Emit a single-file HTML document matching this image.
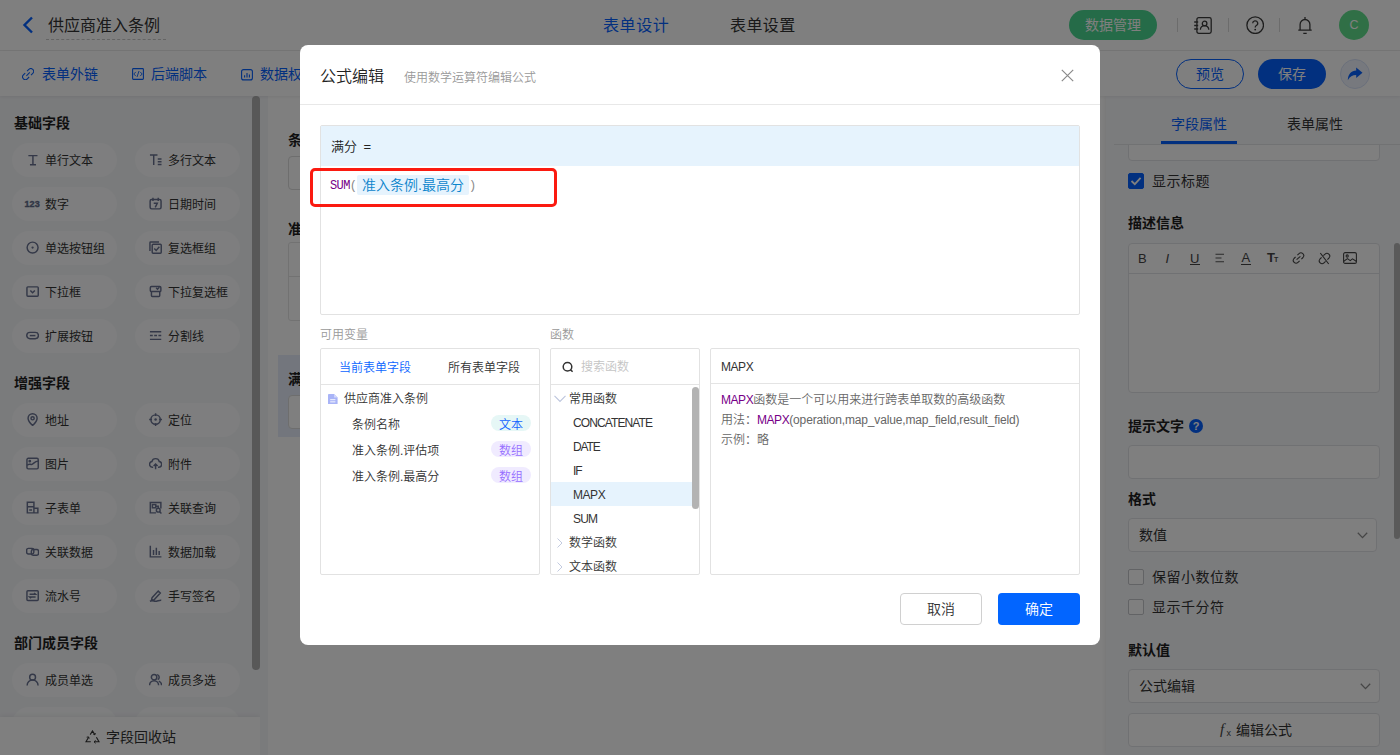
<!DOCTYPE html>
<html lang="zh-CN">
<head>
<meta charset="utf-8">
<title>公式编辑</title>
<style>
*{box-sizing:border-box;margin:0;padding:0}
html,body{width:1400px;height:755px;overflow:hidden;background:#fff}
body{font-family:"Liberation Sans","Noto Sans CJK SC",sans-serif;font-size:14px;color:#333;position:relative}
.abs{position:absolute}
svg{display:block}
/* ---------- page ---------- */
#page{position:absolute;left:0;top:0;width:1400px;height:755px;overflow:hidden;background:#fff}
#hdr{position:absolute;left:0;top:0;width:1400px;height:51px;background:#fff;border-bottom:1px solid #ececec}
#tbar{position:absolute;left:0;top:51px;width:1400px;height:45px;background:#fff;box-shadow:0 1px 3px rgba(0,0,0,.07);z-index:2}
.t16{font-size:16px;line-height:20px;white-space:nowrap}
.t14{font-size:14px;line-height:20px;white-space:nowrap}
.t12{font-size:12px;line-height:18px;white-space:nowrap}
.blue{color:#0560ff}
.sep{position:absolute;top:18px;width:1px;height:14px;background:#d9d9d9}
/* left */
#left{position:absolute;left:0;top:95px;width:268px;height:660px;background:#f5f6f9;overflow:hidden}
#lstrip{position:absolute;left:260px;top:95px;width:8px;height:660px;background:#f5f6f9}
.sect{position:absolute;left:14px;font-size:14px;font-weight:bold;line-height:20px;color:#1f1f1f;white-space:nowrap}
.pill{position:absolute;width:105px;height:34px;border-radius:17px;background:#fcfdfe;font-size:12px;line-height:34px;color:#333;white-space:nowrap}
.pill span{position:absolute;left:33px;top:1px}
.pill svg{position:absolute;left:13.6px;top:10.3px;width:13.2px;height:13.2px;stroke:#687190;fill:none;stroke-width:1.55}
.pill b{position:absolute;left:12.5px;top:0;font-size:9px;color:#616a89;letter-spacing:.1px;-webkit-text-stroke:.35px #616a89}
.c1{left:12px}.c2{left:135px}
#lthumb{position:absolute;left:252px;top:1px;width:8px;height:574px;border-radius:4px;background:#b1b1b1}
#recycle{position:absolute;left:0;top:622px;width:260px;height:38px;background:#fff;box-shadow:0 -1px 5px rgba(0,0,0,.07)}
/* canvas */
#canvas{position:absolute;left:268px;top:95px;width:840px;height:660px;background:#fff}
/* right */
#right{position:absolute;left:1107px;top:95px;width:293px;height:660px;background:#f7f8fb;box-shadow:-1px 0 0 #f7f8fb,-2px 0 5px rgba(0,0,0,.07)}
.rlabel{position:absolute;left:21px;font-size:14px;font-weight:bold;line-height:20px;color:#1f1f1f;white-space:nowrap}
.rinput{position:absolute;left:21px;width:252px;height:34px;border:1px solid #e1e3e6;border-radius:4px;background:#fff}
.cb{position:absolute;left:21px;width:16px;height:16px;border:1px solid #c4c6ca;border-radius:2px;background:#fff}
/* overlay + modal */
#mask{position:absolute;left:0;top:0;width:1400px;height:755px;background:rgba(0,0,0,.5);z-index:10}
#modal{position:absolute;left:300px;top:45px;width:800px;height:600px;background:#fff;border-radius:8px;z-index:11;font-weight:350}
.box{position:absolute;border:1px solid #e2e2e2;background:#fff;border-radius:2px}
.g12{font-size:12px;line-height:18px;color:#999;white-space:nowrap}
.row{position:absolute;font-size:12px;line-height:24px;color:#333;white-space:nowrap}
.tag{position:absolute;left:170px;width:40px;height:16px;border-radius:8px;font-size:12px;line-height:20px;text-align:center;overflow:visible;white-space:nowrap}
.fn{font-family:"Liberation Sans","Noto Sans CJK SC",sans-serif;letter-spacing:-.45px}
</style>
</head>
<body>
<div id="page">
  <!-- header -->
  <div id="hdr">
    <svg class="abs" style="left:22px;top:16px" width="12" height="18" viewBox="0 0 12 18"><path d="M10 1.5 2.5 9 10 16.5" fill="none" stroke="#0560ff" stroke-width="2.4"/></svg>
    <div class="abs t16" style="left:48px;top:16px;color:#333">供应商准入条例</div>
    <div class="abs" style="left:46px;top:39px;width:120px;height:0;border-top:1px dashed #c8c8c8"></div>
    <div class="abs t16 blue" style="left:603px;top:16px;letter-spacing:.6px">表单设计</div>
    <div class="abs t16" style="left:730px;top:16px;color:#333;letter-spacing:.4px">表单设置</div>
    <div class="abs t14" style="left:1069px;top:10px;width:88px;height:30px;border-radius:15px;background:#4ad690;color:#fff;text-align:center;line-height:30px">数据管理</div>

    <svg class="abs" style="left:1193.5px;top:16.8px" width="18" height="17" viewBox="0 0 18 17" fill="none" stroke="#3c3c3c" stroke-width="1.3"><rect x="2.9" y=".7" width="14.3" height="15.6" rx="1.8"/><path d="M.2 5h4M.2 8.500h4M.2 12h4"/><circle cx="10.600" cy="6.500" r="2.300"/><path d="M6.400 12.800a4.200 4.200 0 0 1 8.400 0"/></svg>
    <svg class="abs" style="left:1246px;top:16px" width="18.400" height="18.400" viewBox="0 0 18.400 18.400" fill="none" stroke="#3c3c3c" stroke-width="1.3"><circle cx="9.200" cy="9.200" r="8.300"/><path d="M6.700 7.300a2.500 2.500 0 1 1 3.700 2.200c-.8.500-1.200.9-1.200 1.900"/><circle cx="9.200" cy="13.600" r=".9" fill="#333" stroke="none"/></svg>
    <svg class="abs" style="left:1298px;top:16px" width="14" height="18.500" viewBox="0 0 14 18.500" fill="none" stroke="#3c3c3c" stroke-width="1.3"><path d="M.3 14.200h13.400M2.100 14.200V8.400a4.900 4.900 0 0 1 9.800 0v5.800M7 .9v2.300M5.300 17.300h3.400"/></svg>
    <div class="sep" style="left:1177px"></div>
    <div class="sep" style="left:1228px"></div>
    <div class="sep" style="left:1279px"></div>
    <div class="abs" style="left:1339px;top:10px;width:30px;height:30px;border-radius:15px;background:#60df8c;color:#fff;font-size:12.5px;line-height:30px;text-align:center">C</div>
  </div>
  <!-- toolbar -->
  <div id="tbar">
    <svg class="abs" style="left:22.300px;top:17px" width="12.200" height="12.200" viewBox="0 0 13 13" fill="none" stroke="#0560ff" stroke-width="1.150"><path d="M5.400 3.400 7.300 1.500a2.970 2.970 0 0 1 4.200 4.200L9.600 7.600M7.600 9.600 5.700 11.500a2.970 2.970 0 0 1-4.200-4.200L3.400 5.400M4.700 8.300 8.300 4.700"/></svg>
    <svg class="abs" style="left:132px;top:17px" width="12" height="12" viewBox="0 0 12 12" fill="none" stroke="#0560ff" stroke-width="1.100"><rect x=".6" y=".6" width="10.800" height="10.800" rx=".8"/><path d="M3.800 3.900 1.800 6l2 2.100M8.200 3.900 10.200 6l-2 2.100M7 3 5 9" stroke-width=".9"/></svg>
    <svg class="abs" style="left:241px;top:18px" width="12" height="11.500" viewBox="0 0 12 11.500" fill="none" stroke="#0560ff" stroke-width="1.100"><rect x=".6" y=".6" width="10.800" height="10.300" rx="2"/><path d="M3.600 6.200v2.400M6 4.100v4.500M8.400 5.600v3"/></svg>

    <div class="abs t14 blue" style="left:42px;top:13px">表单外链</div>
    <div class="abs t14 blue" style="left:151px;top:13px">后端脚本</div>
    <div class="abs t14 blue" style="left:260px;top:13px">数据权限</div>
    <div class="abs t14 blue" style="left:1176px;top:8px;width:68px;height:30px;border:1px solid #0560ff;border-radius:15px;text-align:center;line-height:28px">预览</div>
    <div class="abs t14" style="left:1258px;top:8px;width:68px;height:30px;border-radius:15px;background:#0560ff;color:#fff;text-align:center;line-height:30px">保存</div>
    <div class="abs" style="left:1340px;top:8px;width:30px;height:30px;border-radius:15px;border:1px solid #d6e0f7;background:#eff3fc"><svg width="28" height="28" viewBox="1 1 28 28"><path d="M22.500 13.700 16.200 8.600V11.600C11.500 11.800 8 15 7.800 21.200 9.800 17.700 12.500 16.200 16.200 16.100V19Z" fill="#0560ff"/></svg></div>
  </div>
  <!-- left panel -->
  <div id="left">
    <div class="sect" style="top:18px">基础字段</div>
    <div class="pill c1" style="top:48px"><svg viewBox="0 0 14 14"><path d="M2.5 2.8h9.7M7.35 2.8v9.6M4.2 12.4h6.4"/></svg><span>单行文本</span></div>
    <div class="pill c2" style="top:48px"><svg viewBox="0 0 14 14"><path d="M1 2.2h8M5 2.2v10.6M9.3 6.3h4M9.3 9.3h4M9.3 12.3h4"/></svg><span>多行文本</span></div>
    <div class="pill c1" style="top:92px"><b>123</b><span>数字</span></div>
    <div class="pill c2" style="top:92px"><svg viewBox="0 0 14 14"><rect x="1.2" y="2.6" width="11.6" height="10" rx="1.6"/><path d="M4.2 .8v3.4M9.8 .8v3.4M5 6.6h3.8L6.6 11"/></svg><span>日期时间</span></div>
    <div class="pill c1" style="top:136px"><svg viewBox="0 0 14 14"><circle cx="7" cy="7" r="5.8"/><circle cx="7" cy="7" r="1.2" fill="#687190" stroke="none"/></svg><span>单选按钮组</span></div>
    <div class="pill c2" style="top:136px"><svg viewBox="0 0 14 14"><rect x="3.4" y="3.4" width="9.6" height="9.6" rx="1"/><path d="M1 10.6V1.8a.8.8 0 0 1 .8-.8h8.8M5.6 8l2 2 3.4-3.8"/></svg><span>复选框组</span></div>
    <div class="pill c1" style="top:180px"><svg viewBox="0 0 14 14"><rect x="1" y="2" width="12" height="10" rx="1"/><path d="M4.6 5.8 7 8.2l2.4-2.4"/></svg><span>下拉框</span></div>
    <div class="pill c2" style="top:180px"><svg viewBox="0 0 14 14"><rect x="1.4" y="1.6" width="11.2" height="5.4" rx="1.2"/><path d="M2.6 7v4.2a1 1 0 0 0 1 1h6.8a1 1 0 0 0 1-1V7M7.6 3l1.4 1.4L11 2.4"/></svg><span>下拉复选框</span></div>
    <div class="pill c1" style="top:224px"><svg viewBox="0 0 14 14"><rect x=".8" y="3.6" width="12.4" height="6.8" rx="3.4"/><path d="M4 7h6"/></svg><span>扩展按钮</span></div>
    <div class="pill c2" style="top:224px"><svg viewBox="0 0 14 14"><path d="M1 3h12M1 11h12M1 7h3M5.5 7h3M10 7h3"/></svg><span>分割线</span></div>
    <div class="sect" style="top:278px">增强字段</div>
    <div class="pill c1" style="top:308px"><svg viewBox="0 0 14 14"><path d="M7 13.2S2.2 9 2.2 5.6a4.8 4.8 0 0 1 9.600 0C11.8 9 7 13.200 7 13.200z"/><circle cx="7" cy="5.600" r="1.7"/></svg><span>地址</span></div>
    <div class="pill c2" style="top:308px"><svg viewBox="0 0 14 14"><circle cx="7" cy="7" r="5"/><path d="M7 .2v3M7 10.800v3M.2 7h3M10.800 7h3"/><circle cx="7" cy="7" r="1.300" fill="#687190" stroke="none"/></svg><span>定位</span></div>
    <div class="pill c1" style="top:352px"><svg viewBox="0 0 14 14"><rect x="1" y="1.4" width="12" height="11.2" rx="1.4"/><path d="M1.200 9c1.800-2.800 3.600-.6 5.200-1.200 1.800-.7 3-3.200 6.400-3.400"/><circle cx="4" cy="4.400" r=".7"/></svg><span>图片</span></div>
    <div class="pill c2" style="top:352px"><svg viewBox="0 0 14 14"><path d="M4.400 10.800H3.600a3 3 0 0 1-.5-5.960 4 4 0 0 1 7.800 0A3 3 0 0 1 10.400 10.800H9.600M7 13V7.600M4.900 9.500 7 7.400l2.100 2.100"/></svg><span>附件</span></div>
    <div class="pill c1" style="top:396px"><svg viewBox="0 0 14 14"><path d="M1.400 1.400h7v11.200h-7zM1.400 6h7M8.400 7.600h4.200v5H8.400M3.400 9.600h3"/></svg><span>子表单</span></div>
    <div class="pill c2" style="top:396px"><svg viewBox="0 0 14 14"><path d="M12.600 8V1.600H1.400v11h6"/><rect x="3.600" y="3.800" width="3.600" height="3.400"/><circle cx="9.800" cy="9.800" r="2"/><path d="M11.300 11.300l1.900 1.900M7.200 5.500h2.600v2.300"/></svg><span>关联查询</span></div>
    <div class="pill c1" style="top:440px"><svg viewBox="0 0 14 14"><rect x=".7" y="3.600" width="7.600" height="6" rx="1.800"/><rect x="5.700" y="4.800" width="7.600" height="6" rx="1.800"/></svg><span>关联数据</span></div>
    <div class="pill c2" style="top:440px"><svg viewBox="0 0 14 14"><path d="M1.400 .8v11.800h11.800M4.800 5.400v5.200M7.800 3v7.600M10.800 6.400v4.200"/></svg><span>数据加载</span></div>
    <div class="pill c1" style="top:484px"><svg viewBox="0 0 14 14"><rect x="1" y="1.800" width="12" height="10.400" rx="1"/><path d="M3.800 5.600h6.400l-1.600-1.400M10.200 8.400H3.800l1.600 1.400"/></svg><span>流水号</span></div>
    <div class="pill c2" style="top:484px"><svg viewBox="0 0 14 14"><path d="M3.200 9.400 9.800 2.200l2.200 2-6.600 7.200-2.800.6zM1 13c2.500-1.400 4.800.5 7 0 1.800-.4 3.400-1.200 5-1"/></svg><span>手写签名</span></div>
    <div class="sect" style="top:538px">部门成员字段</div>
    <div class="pill c1" style="top:568px"><svg viewBox="0 0 14 14"><circle cx="7" cy="4.400" r="3.100"/><path d="M1.200 13.200a5.800 5.800 0 0 1 11.600 0"/></svg><span>成员单选</span></div>
    <div class="pill c2" style="top:568px"><svg viewBox="0 0 14 14"><circle cx="5.400" cy="4.400" r="2.900"/><path d="M.6 13a4.800 4.800 0 0 1 9.600 0M8.600 1.700a2.900 2.900 0 0 1 .6 5.400M10.400 8.600a4.800 4.800 0 0 1 3 4.400"/></svg><span>成员多选</span></div>
    <div class="pill c1" style="top:612px"></div>
    <div class="pill c2" style="top:612px"></div>
    <div id="lthumb"></div>
    <div id="recycle"><svg class="abs" style="left:84.500px;top:12.500px" width="15" height="14" viewBox="0 0 15 14" fill="none" stroke="#333" stroke-width="1.100"><path d="M5.200 4.600 7.500 .9l2.300 3.700M3.600 7.200 1 11.800h4.800M11.400 7.200 14 11.800H9.200"/><path d="M8.300 4.200l1.600.6.500-1.700M1.700 7.200l1.900-.3.600 1.700M10.600 10.400 9 11.800l1.600 1.400" stroke-width="1"/></svg><div class="abs t14" style="left:106px;top:10px;color:#333">字段回收站</div></div>
  </div>
  <div id="lstrip"></div>
  <!-- canvas -->
  <div id="canvas">
    <div class="abs t14" style="left:20px;top:35px;font-weight:bold;color:#1f1f1f">条例名称</div>
    <div class="abs" style="left:20px;top:61px;width:780px;height:34px;border:1px solid #dcdcdc;border-radius:4px"></div>
    <div class="abs t14" style="left:20px;top:124px;font-weight:bold;color:#1f1f1f">准入条例</div>
    <div class="abs" style="left:20px;top:147px;width:780px;height:79px;border:1px solid #e4e4e4;border-radius:3px"></div>
    <div class="abs" style="left:20px;top:181px;width:780px;height:1px;background:#e4e4e4"></div>
    <div class="abs" style="left:10px;top:260px;width:820px;height:82px;background:#e6edfb"></div>
    <div class="abs t14" style="left:20px;top:274px;font-weight:bold;color:#1f1f1f">满分</div>
    <div class="abs" style="left:20px;top:300px;width:780px;height:34px;border:1px solid #dcdcdc;border-radius:4px;background:#fff"></div>
  </div>
  <!-- right panel -->
  <div id="right">
    <div class="abs t14 blue" style="left:64px;top:19px">字段属性</div>
    <div class="abs t14" style="left:180px;top:19px;color:#333">表单属性</div>
    <div class="abs" style="left:7px;top:49px;width:286px;height:1px;background:#e3e4e6"></div>
    <div class="abs" style="left:54px;top:46px;width:76px;height:3px;background:#0560ff"></div>
    <div class="abs" style="left:0;top:50px;width:293px;height:610px;overflow:hidden">
      <div class="rinput" style="top:-18px"></div>
      <div class="cb" style="top:28px;background:#0560ff;border-color:#0560ff"><svg width="14" height="14" viewBox="0 0 14 14"><path d="M2.5 7 5.8 10.2 11.6 3.8" fill="none" stroke="#fff" stroke-width="1.8"/></svg></div>
      <div class="abs t14" style="left:45px;top:26px;color:#333;letter-spacing:.5px">显示标题</div>
      <div class="rlabel" style="top:68px">描述信息</div>
      <div class="rinput" style="top:98px;height:150px"></div>
      <div class="abs" style="left:22px;top:128px;width:250px;height:1px;background:#e1e3e6"></div>

      <div class="abs" style="left:31px;top:106px;font-size:13px;line-height:16px;color:#444">B</div>
      <div class="abs" style="left:58.5px;top:106px;font-size:13px;line-height:16px;color:#444;font-style:italic">I</div>
      <div class="abs" style="left:83px;top:106px;font-size:13px;line-height:16px;color:#444">U</div>
      <div class="abs" style="left:82.5px;top:119px;width:10px;height:1px;background:#444"></div>
      <svg class="abs" style="left:108px;top:108px" width="10" height="10" viewBox="0 0 10 10" stroke="#555" stroke-width="1.100" fill="none"><path d="M.5 1.200h8.500M.5 5h6M.5 8.800h8.500"/></svg>
      <div class="abs" style="left:134.500px;top:105px;font-size:13px;line-height:16px;color:#444">A</div>
      <div class="abs" style="left:134px;top:119px;width:10px;height:1px;background:#444"></div>
      <div class="abs" style="left:160px;top:105px;font-size:13px;line-height:16px;color:#444;font-weight:bold;white-space:nowrap">T<span style="font-size:7px;margin-left:-1px">T</span></div>
      <svg class="abs" style="left:185px;top:107px" width="13" height="12" viewBox="0 0 13 12" stroke="#444" stroke-width="1.100" fill="none"><path d="M5.400 3.200 7 1.700a2.760 2.760 0 0 1 4 3.800L9.400 7.100M7.600 8.800 6 10.300a2.760 2.760 0 0 1-4-3.800L3.600 4.900M4.600 7.700 8.400 4.300"/></svg>
      <svg class="abs" style="left:210.500px;top:106.500px" width="13" height="13" viewBox="0 0 13 13" stroke="#444" stroke-width="1.100" fill="none"><path d="M5.400 3.700 7 2.200a2.760 2.760 0 0 1 4 3.800L9.400 7.600M7.600 9.300 6 10.800a2.760 2.760 0 0 1-4-3.800L3.600 5.400M2.300 1 10.700 12"/></svg>
      <svg class="abs" style="left:235.500px;top:107px" width="14" height="12" viewBox="0 0 14 12" stroke="#444" stroke-width="1.100" fill="none"><rect x=".6" y=".6" width="12.800" height="10.800" rx="1.500"/><circle cx="4.200" cy="4" r="1.100"/><path d="M.8 9.300 4.500 6.600l2.700 2 2.300-1.800 3.700 2.400"/></svg>
      <div class="rlabel" style="top:271px">提示文字</div>
      <div class="abs" style="left:82px;top:274px;width:14px;height:14px;border-radius:7px;background:#0560ff;color:#fff;font-size:11px;font-weight:bold;line-height:14px;text-align:center">?</div>
      <div class="rinput" style="top:300px"></div>
      <div class="rlabel" style="top:344px">格式</div>
      <div class="rinput" style="top:373px;width:249px"><div class="abs t14" style="left:10px;top:6px;color:#333">数值</div><svg class="abs" style="left:228px;top:12.800px" width="11" height="7" viewBox="0 0 11 7"><path d="M.8.8 5.500 5.600 10.200.8" fill="none" stroke="#8c8c8c" stroke-width="1.300"/></svg></div>
      <div class="cb" style="top:424px"></div>
      <div class="abs t14" style="left:45px;top:422px;color:#333;letter-spacing:.5px">保留小数位数</div>
      <div class="cb" style="top:454px"></div>
      <div class="abs t14" style="left:45px;top:452px;color:#333;letter-spacing:.5px">显示千分符</div>
      <div class="rlabel" style="top:495px">默认值</div>
      <div class="rinput" style="top:524px"><div class="abs t14" style="left:10px;top:6px;color:#333">公式编辑</div><svg class="abs" style="left:231px;top:12.800px" width="11" height="7" viewBox="0 0 11 7"><path d="M.8.8 5.500 5.600 10.200.8" fill="none" stroke="#8c8c8c" stroke-width="1.300"/></svg></div>
      <div class="rinput" style="top:568px"><div class="abs" style="left:91px;top:5px;font-family:'Liberation Serif',serif;font-style:italic;font-size:15px;line-height:20px;color:#444">f</div><div class="abs" style="left:97.5px;top:14px;font-size:9px;line-height:10px;color:#444">x</div><div class="abs t14" style="left:107px;top:6px;color:#333">编辑公式</div></div>
    </div>
    <div class="abs" style="left:287px;top:148px;width:6px;height:296px;border-radius:3px;background:#b5b5b5"></div>
  </div>
</div>

<div id="mask"></div>

<!-- modal -->
<div id="modal">
  <div class="abs t16" style="left:20px;top:22px;color:#222">公式编辑</div>
  <div class="abs g12" style="left:104px;top:24px">使用数学运算符编辑公式</div>
  <svg class="abs" style="left:760.500px;top:23.500px" width="13" height="13" viewBox="0 0 13 13"><path d="M.8.800 12.200 12.200M12.200.8.800 12.200" stroke="#8a8a8a" stroke-width="1.200" fill="none"/></svg>
  <div class="abs" style="left:0;top:59px;width:800px;height:1px;background:#e8e8e8"></div>
  <!-- editor -->
  <div class="box" style="left:20px;top:80px;width:760px;height:190px">
    <div class="abs" style="left:0;top:0;width:758px;height:40px;background:#e6f3fd"></div>
    <div class="abs" style="left:10px;top:11px;font-size:13px;line-height:20px;color:#222;white-space:nowrap;word-spacing:3px">满分 =</div>
    <div class="abs" style="left:9px;top:51px;font-family:'Liberation Mono',monospace;font-size:12px;letter-spacing:-.6px;line-height:19px;color:#708;white-space:nowrap">SUM<span style="color:#8a8a8a">(</span></div>
    <div class="abs" style="left:36px;top:49px;width:112px;height:20px;border-radius:2px;background:#e6f3fd;color:#0a84cc;font-size:14px;line-height:20px;text-align:center;white-space:nowrap">准入条例.最高分</div>
    <div class="abs" style="left:148px;top:51px;font-family:'Liberation Mono',monospace;font-size:12px;line-height:19px;color:#8a8a8a">)</div>
  </div>
  <div class="abs" style="left:10px;top:123px;width:247px;height:39px;border:3px solid #fb1a10;border-radius:5px"></div>
  <!-- labels -->
  <div class="abs g12" style="left:20px;top:281px">可用变量</div>
  <div class="abs g12" style="left:250px;top:281px">函数</div>
  <!-- variables -->
  <div class="box" style="left:20px;top:303px;width:220px;height:227px">
    <div class="abs t12" style="left:18px;top:10px;color:#0b65ff">当前表单字段</div>
    <div class="abs t12" style="left:127px;top:10px;color:#333">所有表单字段</div>
    <div class="abs" style="left:0;top:35px;width:218px;height:1px;background:#e4e4e4"></div>
    <svg class="abs" style="left:7px;top:44.500px" width="9.600" height="10.500" viewBox="0 0 11 12"><path d="M1 0h6l4 4v7a1 1 0 0 1-1 1H1a1 1 0 0 1-1-1V1a1 1 0 0 1 1-1z" fill="#a9b4f7"/><path d="M2.5 6.5h6M2.5 9h6" stroke="#fff" stroke-width="1"/><path d="M7 0v4h4z" fill="#d5dafc"/></svg>
    <div class="row" style="left:23px;top:38px">供应商准入条例</div>
    <div class="row" style="left:31px;top:64px">条例名称</div>
    <div class="tag" style="top:66px;background:#e6f7f6;color:#1464ff">文本</div>
    <div class="row" style="left:31px;top:90px">准入条例.评估项</div>
    <div class="tag" style="top:92px;background:#f0ebff;color:#966eff">数组</div>
    <div class="row" style="left:31px;top:116px">准入条例.最高分</div>
    <div class="tag" style="top:118px;background:#f0ebff;color:#966eff">数组</div>
  </div>
  <!-- functions -->
  <div class="box" style="left:250px;top:303px;width:150px;height:227px;overflow:hidden">
    <svg class="abs" style="left:10.500px;top:12px" width="12" height="12" viewBox="0 0 12 12"><circle cx="5.500" cy="5.700" r="4.300" fill="none" stroke="#333" stroke-width="1.500"/><path d="M8.400 8.600 10.600 10.800" stroke="#333" stroke-width="1.500"/></svg>
    <div class="abs t12" style="left:30px;top:9px;color:#c4c4c4">搜索函数</div>
    <div class="abs" style="left:0;top:35px;width:148px;height:1px;background:#e4e4e4"></div>
    <div class="abs" style="left:0;top:133px;width:141px;height:24px;background:#e6f3fd"></div>
    <svg class="abs" style="left:2.500px;top:45.500px" width="12" height="8" viewBox="0 0 12 8"><path d="M.5.900 6 6.500 11.500.9" fill="none" stroke="#bcc5dd" stroke-width="1.100"/></svg>
    <div class="row" style="left:18px;top:38px">常用函数</div>
    <div class="row" style="left:22px;top:62px;letter-spacing:-.9px">CONCATENATE</div>
    <div class="row" style="left:22px;top:86px;letter-spacing:-1.1px">DATE</div>
    <div class="row" style="left:22px;top:110px;letter-spacing:-1px">IF</div>
    <div class="row fn" style="left:22px;top:134px">MAPX</div>
    <div class="row" style="left:22px;top:158px;letter-spacing:-.8px">SUM</div>
    <svg class="abs" style="left:5.500px;top:189px" width="6" height="10" viewBox="0 0 6 10"><path d="M.5.5 5 5 .5 9.500" fill="none" stroke="#c3cbe0" stroke-width="1"/></svg>
    <div class="row" style="left:18px;top:182px">数学函数</div>
    <svg class="abs" style="left:5.500px;top:213px" width="6" height="10" viewBox="0 0 6 10"><path d="M.5.5 5 5 .5 9.500" fill="none" stroke="#c3cbe0" stroke-width="1"/></svg>
    <div class="row" style="left:18px;top:206px">文本函数</div>
    <div class="abs" style="left:141px;top:38px;width:7px;height:122px;border-radius:4px;background:#b3b3b3"></div>
  </div>
  <!-- description -->
  <div class="box" style="left:410px;top:303px;width:370px;height:227px">
    <div class="abs t12 fn" style="left:10px;top:9px;color:#333">MAPX</div>
    <div class="abs" style="left:0;top:34px;width:368px;height:1px;background:#e4e4e4"></div>
    <div class="abs" style="left:10px;top:41px;font-size:12px;line-height:20px;color:#666;white-space:nowrap">
      <div><span class="fn" style="color:#708">MAPX</span>函数是一个可以用来进行跨表单取数的高级函数</div>
      <div>用法：<span class="fn" style="color:#708">MAPX</span><span style="letter-spacing:-.15px">(operation,map_value,map_field,result_field)</span></div>
      <div>示例：略</div>
    </div>
  </div>
  <!-- footer -->
  <div class="abs t14" style="left:600px;top:548px;width:82px;height:32px;border:1px solid #d0d0d0;border-radius:4px;text-align:center;line-height:30px;color:#333">取消</div>
  <div class="abs t14" style="left:698px;top:548px;width:82px;height:32px;border-radius:4px;background:#0265ff;text-align:center;line-height:32px;color:#fff">确定</div>
</div>
</body>
</html>
